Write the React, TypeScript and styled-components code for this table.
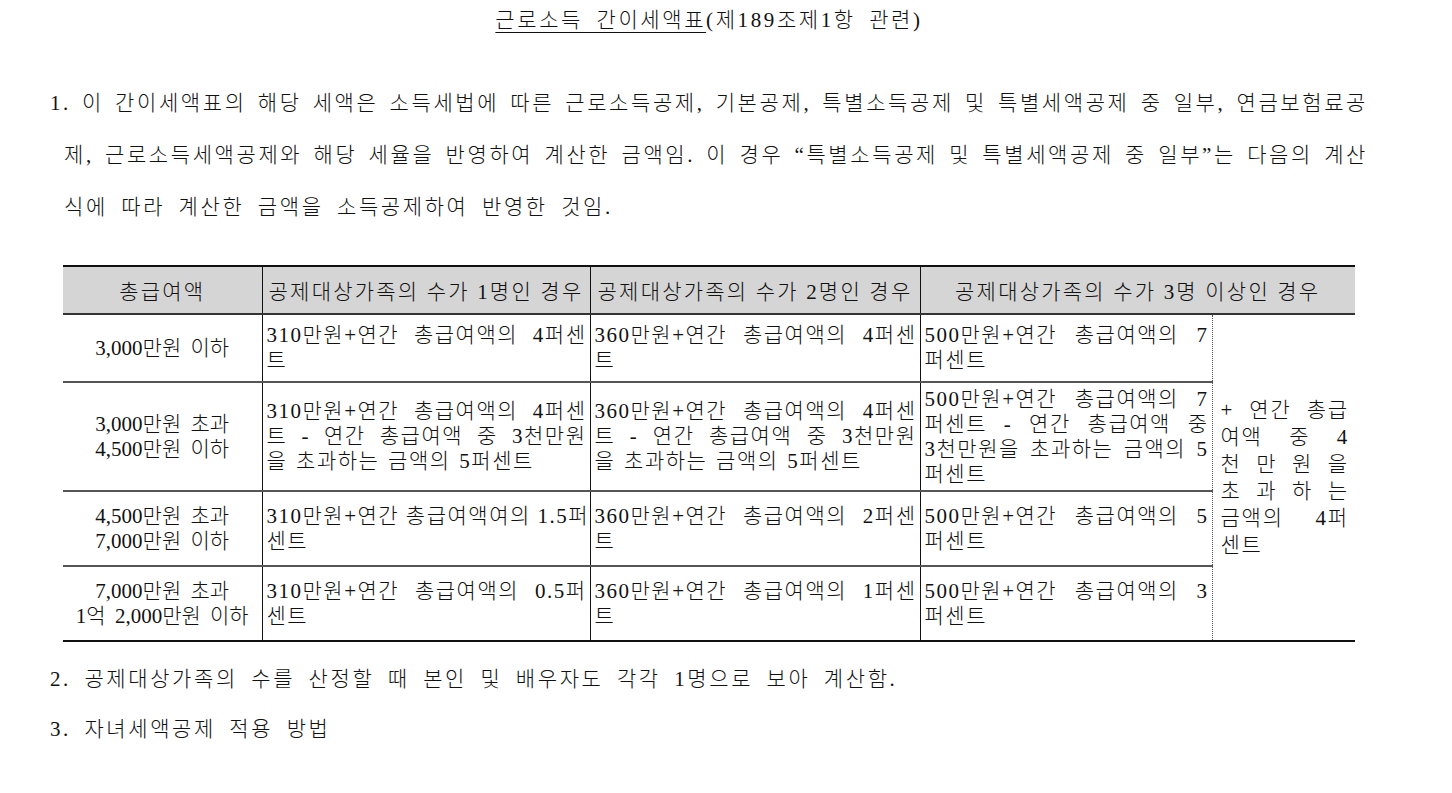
import React from 'react';
import styled, { createGlobalStyle } from 'styled-components';

const FONT = `"Liberation Serif", "Noto Sans CJK KR", serif`;

const GlobalStyle = createGlobalStyle`
    html, body {
        margin: 0;
        padding: 0;
        background: #ffffff;
    }
    body {
        font-family: ${ FONT };
        color: #111111;
    }
`

const Page = styled.div`
    width: 1318px;
    padding: 8px 0 40px 50px;
    font-size: 21px;
    font-weight: 300;
    letter-spacing: 2.6px;
    word-spacing: 5.6px;
`

const Title = styled.h1`
    margin: 0;
    font-size: 21px;
    font-weight: 300;
    line-height: 24px;
    text-align: center;
`

const Underlined = styled.span`
    text-decoration: underline;
    text-decoration-thickness: 1px;
    text-underline-offset: 5px;
`

const Item = styled.div<{ $hanging?: boolean; $gap: number }>`
    margin-top: ${ p => p.$gap }px;
    line-height: ${ p => p.$hanging ? 52 : 50 }px;
    padding-left: ${ p => p.$hanging ? 14 : 0 }px;

    & > span:first-child {
        margin-left: ${ p => p.$hanging ? -14 : 0 }px;
    }
`

// justified lines start from plain spaces and let the browser stretch them
const Line = styled.span<{ $justify?: boolean }>`
    display: block;
    white-space: nowrap;
    ${ p => p.$justify && `
        word-spacing: 0;
        text-align: justify;
        text-align-last: justify;
    ` }
`

const Table = styled.table`
    margin: 32px 0 0 13px;
    width: 1292px;
    border-collapse: collapse;
    table-layout: fixed;
    font-size: 21px;
    letter-spacing: 1.5px;
    word-spacing: 2px;
    border-top: 2px solid #111;
    border-bottom: 2px solid #111;
`

const HeadCell = styled.th`
    height: 46px;
    padding: 0;
    background: #d5d5d5;
    font-weight: 300;
    letter-spacing: 2.2px;
    word-spacing: 0;
    text-align: center;
    border-bottom: 2px solid #333;
    border-left: 1px solid #111;

    &:first-child {
        border-left: none;
    }
`

const Row = styled.tr<{ $h: number }>`
    height: ${ p => p.$h }px;
`

const Cell = styled.td`
    padding: 0 3px 0 4px;
    vertical-align: middle;
    line-height: 25px;
    text-align: left;
    border-top: 2px solid #555;
    border-left: 1px solid #111;
`

const RangeCell = styled(Cell)`
    padding: 0 2px;
    text-align: center;
    letter-spacing: 0;
    word-spacing: 4px;
    border-left: none;
`

const NoteCell = styled.td`
    padding: 0 6px 0 8px;
    vertical-align: middle;
    line-height: 27px;
    letter-spacing: 1.8px;
    border-left: 1px dotted #555;
`

type TaxRow = {
    h: number;
    range: string[];
    one: string[];
    two: string[];
    three: string[];
};

const ROWS: TaxRow[] = [
    {
        h: 68,
        range: ["3,000만원 이하"],
        one: ["310만원+연간 총급여액의 4퍼센", "트"],
        two: ["360만원+연간 총급여액의 4퍼센", "트"],
        three: ["500만원+연간 총급여액의 7", "퍼센트"],
    },
    {
        h: 109,
        range: ["3,000만원 초과", "4,500만원 이하"],
        one: ["310만원+연간 총급여액의 4퍼센", "트 - 연간 총급여액 중 3천만원", "을 초과하는 금액의 5퍼센트"],
        two: ["360만원+연간 총급여액의 4퍼센", "트 - 연간 총급여액 중 3천만원", "을 초과하는 금액의 5퍼센트"],
        three: ["500만원+연간 총급여액의 7", "퍼센트 - 연간 총급여액 중", "3천만원을 초과하는 금액의 5", "퍼센트"],
    },
    {
        h: 75,
        range: ["4,500만원 초과", "7,000만원 이하"],
        one: ["310만원+연간 총급여액여의 1.5퍼", "센트"],
        two: ["360만원+연간 총급여액의 2퍼센", "트"],
        three: ["500만원+연간 총급여액의 5", "퍼센트"],
    },
    {
        h: 75,
        range: ["7,000만원 초과", "1억 2,000만원 이하"],
        one: ["310만원+연간 총급여액의 0.5퍼", "센트"],
        two: ["360만원+연간 총급여액의 1퍼센", "트"],
        three: ["500만원+연간 총급여액의 3", "퍼센트"],
    },
];

const NOTE = ["+ 연간 총급", "여액 중 4", "천 만 원 을", "초 과 하 는", "금액의 4퍼", "센트"];

const HEADERS = [
    "총급여액",
    "공제대상가족의 수가 1명인 경우",
    "공제대상가족의 수가 2명인 경우",
    "공제대상가족의 수가 3명 이상인 경우",
];

// every line but the last is stretched to the cell edge, as in the printed form
const Lines = ({ lines, justify = true }: { lines: string[]; justify?: boolean }) => (
    <>
        {lines.map((text, i) => (
            <Line key={i} $justify={justify && i < lines.length - 1}>{text}</Line>
        ))}
    </>
);

const App = () => {
    return (
        <>
            <GlobalStyle/>
            <Page>
                <Title>
                    <Underlined>근로소득 간이세액표</Underlined>(제189조제1항 관련)
                </Title>
                <Item $hanging $gap={45}>
                    <Line $justify>1. 이 간이세액표의 해당 세액은 소득세법에 따른 근로소득공제, 기본공제, 특별소득공제 및 특별세액공제 중 일부, 연금보험료공</Line>
                    <Line $justify>제, 근로소득세액공제와 해당 세율을 반영하여 계산한 금액임. 이 경우 “특별소득공제 및 특별세액공제 중 일부”는 다음의 계산</Line>
                    <Line>식에 따라 계산한 금액을 소득공제하여 반영한 것임.</Line>
                </Item>
                <Table>
                    <colgroup>
                        <col style={{ width: 199 }}/>
                        <col style={{ width: 328 }}/>
                        <col style={{ width: 330 }}/>
                        <col style={{ width: 292 }}/>
                        <col style={{ width: 143 }}/>
                    </colgroup>
                    <thead>
                        <tr>
                            {HEADERS.map((h, i) => (
                                <HeadCell key={i} colSpan={i === 3 ? 2 : 1}>{h}</HeadCell>
                            ))}
                        </tr>
                    </thead>
                    <tbody>
                        {ROWS.map((row, index) => (
                            <Row key={index} $h={row.h}>
                                <RangeCell><Lines lines={row.range} justify={false}/></RangeCell>
                                <Cell><Lines lines={row.one}/></Cell>
                                <Cell><Lines lines={row.two}/></Cell>
                                <Cell><Lines lines={row.three}/></Cell>
                                {index === 0 && (
                                    <NoteCell rowSpan={4}><Lines lines={NOTE}/></NoteCell>
                                )}
                            </Row>
                        ))}
                    </tbody>
                </Table>
                <Item $gap={12}>
                    <Line>2. 공제대상가족의 수를 산정할 때 본인 및 배우자도 각각 1명으로 보아 계산함.</Line>
                </Item>
                <Item $gap={0}>
                    <Line>3. 자녀세액공제 적용 방법</Line>
                </Item>
            </Page>
        </>
    );
}

export default App;
